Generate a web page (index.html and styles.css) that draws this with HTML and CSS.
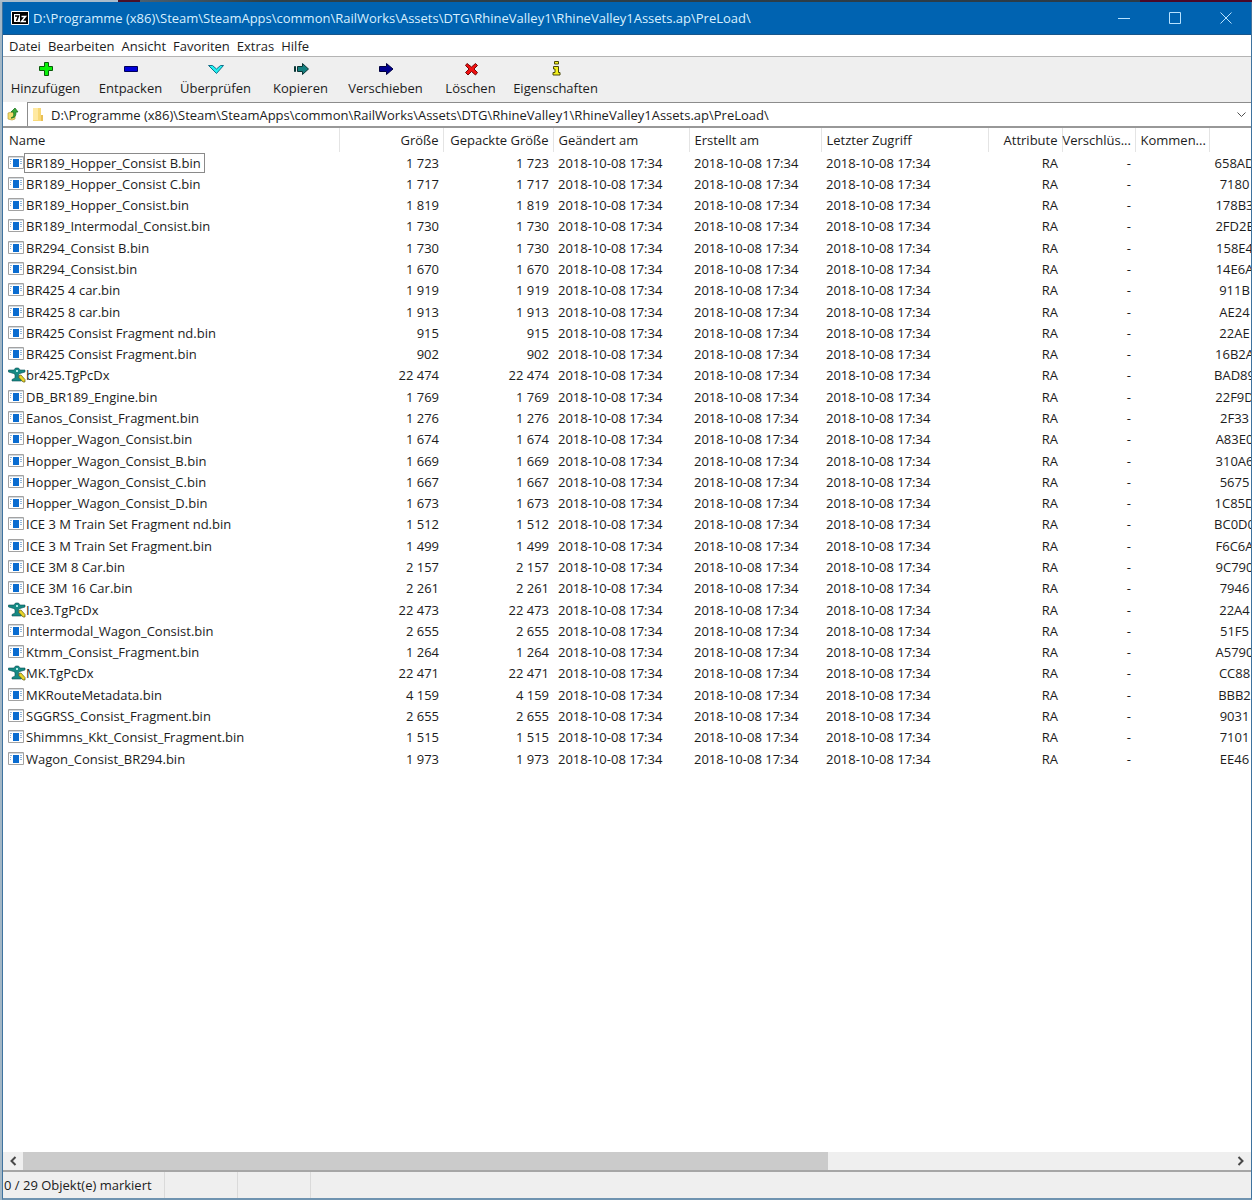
FILE: index.html
```html
<!DOCTYPE html>
<html lang="de">
<head>
    <meta charset="UTF-8">
    <title>D:\Programme (x86)\Steam\SteamApps\common\RailWorks\Assets\DTG\RhineValley1\RhineValley1Assets.ap\PreLoad\</title>
    <link rel="stylesheet" href="styles.css">
</head>
<body>
    <svg class="sprite" aria-hidden="true">
        <symbol id="icon-bin" viewBox="0 0 16 14">
            <path fill="#fff" stroke="#a2a2a2" d="M.5.5h15v12H.5z"/>
            <path fill="#d3d9de" d="M1 1h14v1H1z"/>
            <path fill="#0a6cd0" d="M5 3h6v8H5z"/>
            <path stroke="#8fb4d8" d="M2 3.500h2M12 3.500h2M2 5.500h1M2 7.500h1M12 5.500h2M12 7.500h2"/>
        </symbol>
        <symbol id="icon-plane" viewBox="0 0 18 16">
            <path fill="#168a84" stroke="#0b4f55" stroke-width=".6" d="M.5 3h5.500l1.500-2h3L12 3h5v2l-5 1.500-1.500 1v3.500l3 1.500v1.500H4v-1.500l3-1.500V7.500L5.500 6.500.5 5z"/>
            <path fill="#aee8e4" d="M8 3h2v2H8z"/>
            <path fill="#e8d528" stroke="#5d5a18" stroke-width=".7" d="M11 8.500l2-.5 4 4.500v2.500h-2l-4-4.500z"/>
        </symbol>
    </svg>
    <div class="window">
        <header class="title">
            <svg class="logo" width="18" height="14" viewBox="0 0 18 14">
                <path fill="#000" stroke="#fff" d="M.5.5h17v13H.5z"/>
                <path fill="#fff" d="M3 3h6v8H3z"/>
                <path fill="none" stroke="#000" stroke-width="1.500" d="M4 5h3.500L5.500 10"/>
                <path fill="none" stroke="#fff" stroke-width="1.500" d="M10.500 5.500h4l-4 5h4.500"/>
            </svg>
            <h1>D:\Programme (x86)\Steam\SteamApps\common\RailWorks\Assets\DTG\RhineValley1\RhineValley1Assets.ap\PreLoad\</h1>
            <div class="controls">
                <button aria-label="Minimieren"><svg width="12" height="12"><path d="M0 6.500h12"/></svg></button>
                <button aria-label="Maximieren"><svg width="12" height="12"><path d="M.5.5h11v11H.5z"/></svg></button>
                <button aria-label="Schließen"><svg width="12" height="12"><path d="M.5.5l11 11M11.500.5l-11 11"/></svg></button>
            </div>
        </header>

        <nav class="menu">
            <button>Datei</button>
            <button>Bearbeiten</button>
            <button>Ansicht</button>
            <button>Favoriten</button>
            <button>Extras</button>
            <button>Hilfe</button>
        </nav>

        <div class="toolbar">
            <button>
                <svg width="16" height="16"><path fill="#0af00a" stroke="#0a5a0a" d="M6.500 1.500h4v4h4v4h-4v5h-4v-5h-5v-4h5z"/></svg>
                Hinzufügen
            </button>
            <button>
                <svg width="16" height="16"><path fill="#0000d8" stroke="#00005a" d="M1.500 5.500h13v5h-13z"/></svg>
                Entpacken
            </button>
            <button>
                <svg width="16" height="16"><path fill="#20f0f0" stroke="#14708a" d="M.5 4.500h4l4 3.500 4-3.500h3L8.500 12.500z"/></svg>
                Überprüfen
            </button>
            <button>
                <svg width="16" height="16"><path fill="#148080" stroke="#0a3434" d="M1.500 5.500h1v5h-1zM4.500 5.500h5v-3l6 5.500-6 5.500v-3h-5z"/></svg>
                Kopieren
            </button>
            <button>
                <svg width="16" height="16"><path fill="#000090" stroke="#000040" d="M1.500 5.500h7v-3l6.500 5.500-6.500 5.500v-3h-7z"/></svg>
                Verschieben
            </button>
            <button>
                <svg width="16" height="16"><path fill="#f01010" stroke="#700808" d="M4 2.500L8.500 6 12.500 2.500l2 2L11 8l3.500 3.500-2 2.500-4-3.500L5 14l-2.500-2.500L6 8 2.500 4.500z"/></svg>
                Löschen
            </button>
            <button>
                <svg width="16" height="16"><path fill="#f4f01c" stroke="#4a4808" d="M6.500.5h4v2.500h-4zM5.500 5.500h5v6h1.500v2.500H5v-2.500h2v-3.500H5.500z"/></svg>
                Eigenschaften
            </button>
        </div>

        <div class="address">
            <button class="up" aria-label="Übergeordneter Ordner">
                <svg width="12" height="14" viewBox="0 0 12 14">
                    <path fill="#f3dc6c" stroke="#b99f38" stroke-width=".7" d="M1 6l4-1 3 2v5l-3 1-4-1z"/>
                    <path fill="#38a838" stroke="#176a17" stroke-width=".7" d="M4 11c3-1 3-3 2.500-6H4l4-4 3 4H9c0 4-1 6-5 6z"/>
                </svg>
            </button>
            <div class="combo">
                <svg width="12" height="14" viewBox="0 0 12 14">
                    <path fill="#f8d978" d="M0 0h8v13H0z"/>
                    <path fill="#ffe9a2" d="M0 0h5v12H0z"/>
                    <path fill="#e9bf55" d="M8 7h2v6H8z"/>
                </svg>
                <input type="text" aria-label="Pfad" value="D:\Programme (x86)\Steam\SteamApps\common\RailWorks\Assets\DTG\RhineValley1\RhineValley1Assets.ap\PreLoad\">
                <button aria-label="Verlauf"><svg width="9" height="6"><path d="M.5.5l4 4 4-4"/></svg></button>
            </div>
        </div>

        <main class="list">
            <table>
                <colgroup>
                    <col class="c-name"><col class="c-size"><col class="c-packed"><col class="c-changed"><col class="c-created">
                    <col class="c-access"><col class="c-attr"><col class="c-crypt"><col class="c-comment"><col class="c-crc">
                </colgroup>
                <thead>
                    <tr>
                        <th>Name</th>
                        <th class="num">Größe</th>
                        <th class="num">Gepackte Größe</th>
                        <th>Geändert am</th>
                        <th>Erstellt am</th>
                        <th>Letzter Zugriff</th>
                        <th class="num">Attribute</th>
                        <th class="num">Verschlüs...</th>
                        <th>Kommen...</th>
                        <th></th>
                    </tr>
                </thead>
                <tbody id="files"></tbody>
            </table>
        </main>

        <div class="scroll">
            <button aria-label="Nach links"><svg width="8" height="10"><path d="M6.500 1l-4 4 4 4"/></svg></button>
            <div class="track"><div class="thumb"></div></div>
            <button aria-label="Nach rechts"><svg width="8" height="10"><path d="M1.500 1l4 4-4 4"/></svg></button>
        </div>

        <footer class="status">
            <span class="count">0 / 29 Objekt(e) markiert</span>
            <span></span>
            <span></span>
        </footer>
    </div>

    <script>
        var date = '2018-10-08 17:34';
        // name, size, crc
        var files = [
            ['BR189_Hopper_Consist B.bin', '1 723', '658AD'],
            ['BR189_Hopper_Consist C.bin', '1 717', '7180'],
            ['BR189_Hopper_Consist.bin', '1 819', '178B3'],
            ['BR189_Intermodal_Consist.bin', '1 730', '2FD2E'],
            ['BR294_Consist B.bin', '1 730', '158E4'],
            ['BR294_Consist.bin', '1 670', '14E6A'],
            ['BR425 4 car.bin', '1 919', '911B'],
            ['BR425 8 car.bin', '1 913', 'AE24'],
            ['BR425 Consist Fragment nd.bin', '915', '22AE'],
            ['BR425 Consist Fragment.bin', '902', '16B2A'],
            ['br425.TgPcDx', '22 474', 'BAD89'],
            ['DB_BR189_Engine.bin', '1 769', '22F9D'],
            ['Eanos_Consist_Fragment.bin', '1 276', '2F33'],
            ['Hopper_Wagon_Consist.bin', '1 674', 'A83E0'],
            ['Hopper_Wagon_Consist_B.bin', '1 669', '310A6'],
            ['Hopper_Wagon_Consist_C.bin', '1 667', '5675'],
            ['Hopper_Wagon_Consist_D.bin', '1 673', '1C85D'],
            ['ICE 3 M Train Set Fragment nd.bin', '1 512', 'BC0D0'],
            ['ICE 3 M Train Set Fragment.bin', '1 499', 'F6C6A'],
            ['ICE 3M 8 Car.bin', '2 157', '9C790'],
            ['ICE 3M 16 Car.bin', '2 261', '7946'],
            ['Ice3.TgPcDx', '22 473', '22A4'],
            ['Intermodal_Wagon_Consist.bin', '2 655', '51F5'],
            ['Ktmm_Consist_Fragment.bin', '1 264', 'A5790'],
            ['MK.TgPcDx', '22 471', 'CC88'],
            ['MKRouteMetadata.bin', '4 159', 'BBB2'],
            ['SGGRSS_Consist_Fragment.bin', '2 655', '9031'],
            ['Shimmns_Kkt_Consist_Fragment.bin', '1 515', '7101'],
            ['Wagon_Consist_BR294.bin', '1 973', 'EE46']
        ];
        var html = '';
        for (let i = 0; i < files.length; i++) {
            let f = files[i];
            let icon = f[0].endsWith('.bin') ? 'bin' : 'plane';
            html += '<tr>' +
                '<td><div class="file"><svg class="' + icon + '"><use href="#icon-' + icon + '"/></svg>' +
                '<span' + (i === 0 ? ' class="focused"' : '') + '>' + f[0] + '</span></div></td>' +
                '<td class="num">' + f[1] + '</td>' +
                '<td class="num">' + f[1] + '</td>' +
                '<td>' + date + '</td><td>' + date + '</td><td>' + date + '</td>' +
                '<td class="num">RA</td><td class="num">-</td><td></td>' +
                '<td class="crc">' + f[2] + '</td></tr>';
        }
        document.getElementById('files').innerHTML = html;
    </script>
</body>
</html>
```

FILE: styles.css
```css
*{
    margin:0;
    padding:0;
    box-sizing: border-box;
}
body{
    height:100vh;
    padding:2px 0 0 2px;
    font:13px/18px "Open Sans", "Noto Sans", sans-serif;
    color:#1c1c1c;
    background: linear-gradient(90deg, #a9bccb 118px, #4a1028 118px, #4a1028 140px, #4c5f6e 140px, #2f4048 265px, #2b3b48 1140px, #4a0828 1140px) top / 100% 2px no-repeat, #a3b7c6;
}
button{
    border:0;
    background: none;
    font:inherit;
    color:inherit;
}
svg{
    display:block;
    flex:none;
}
.sprite{
    width:0;
    height:0;
    position:absolute;
}
.window{
    height:100%;
    display:flex;
    flex-direction: column;
    border:1px solid #3f739f;
    border-top:0;
    border-bottom:2px solid #6f93b0;
    background: #fff;
    overflow:hidden;
}

/*标题栏*/
.title{
    height:33px;
    flex:none;
    display:flex;
    align-items: center;
    background: #0063b1;
    border-bottom:1px solid #17568c;
    color:#d8f0ff;
}
.title .logo{
    margin:0 4px 0 8px;
}
.title h1{
    flex:1;
    font-size: 13px;
    font-weight: normal;
    white-space: nowrap;
    overflow:hidden;
}
.controls{
    display:flex;
}
.controls button{
    width:51px;
    height:32px;
    display:flex;
    align-items: center;
    justify-content: center;
}
.controls path{
    fill:none;
    stroke:#b8e2ff;
}

/*菜单和工具栏*/
.menu{
    height:22px;
    flex:none;
    display:flex;
    align-items: center;
    gap:7px;
    padding-left:6px;
    border-bottom:1px solid #b4b4b4;
}
.toolbar{
    height:45px;
    flex:none;
    display:flex;
    background: #efefef;
}
.toolbar button{
    width:85px;
    display:flex;
    flex-direction: column;
    align-items: center;
    gap:2px;
    padding-top:4px;
}

/*地址栏*/
.address{
    height:26px;
    flex:none;
    display:flex;
    border-bottom:2px solid #989898;
}
.address .up{
    width:24px;
    padding-left:4px;
}
.combo{
    flex:1;
    display:flex;
    align-items: center;
    border:1px solid #8c8c8c;
    border-width:1px 0 0 1px;
    padding:0 5px;
}
.combo input{
    flex:1;
    margin-left:6px;
    border:0;
    outline:0;
    font:inherit;
    color:inherit;
}
.combo button path{
    fill:none;
    stroke:#505050;
}

/*文件列表*/
.list{
    flex:1;
    overflow:hidden;
}
table{
    width:1257px;
    table-layout: fixed;
    border-collapse: collapse;
}
.c-name{ width:336px; }
.c-size{ width:104px; }
.c-packed{ width:110px; }
.c-changed{ width:136px; }
.c-created{ width:132px; }
.c-access{ width:167px; }
.c-attr{ width:74px; }
.c-crypt{ width:73px; }
.c-comment{ width:74px; }
.c-crc{ width:51px; }
th, td{
    padding:0 4px 0 5px;
    text-align: left;
    font-weight: normal;
    white-space: nowrap;
}
th{
    height:24px;
    border-right:1px solid #e4e4e4;
}
th:first-child{
    padding-left:6px;
}
td{
    height:21px;
}
/*行高交替 21 / 22*/
tr:nth-child(7n+4) td, tr:nth-child(7n) td{
    height:22px;
}
.num{
    padding-left:0;
    text-align: right;
}
.crc{
    padding:0;
    text-align: center;
}
.file{
    display:flex;
    align-items: center;
}
.file .bin{
    width:16px;
    height:14px;
}
.file .plane{
    width:18px;
    height:16px;
    margin-right:-2px;
}
.file span{
    margin-left:1px;
    padding:0 3px 0 1px;
}
.file .focused{
    outline:1px solid #8a8a8a;
}

/*滚动条*/
.scroll{
    height:18px;
    flex:none;
    display:flex;
    background: #efefef;
}
.scroll button{
    width:20px;
    display:flex;
    align-items: center;
    justify-content: center;
}
.scroll path{
    fill:none;
    stroke:#484848;
    stroke-width:2;
}
.track{
    flex:1;
}
.thumb{
    width:calc(100% * 2 / 3);
    height:100%;
    background: #cbcbcb;
}

/*状态栏*/
.status{
    height:28px;
    flex:none;
    display:flex;
    align-items: center;
    border-top:2px solid #a6a6a6;
    background: #efefef;
}
.status span{
    width:73px;
    height:26px;
    line-height: 26px;
    border-right:1px solid #dadada;
    white-space: nowrap;
}
.status .count{
    width:162px;
    padding-left:1px;
}
```
